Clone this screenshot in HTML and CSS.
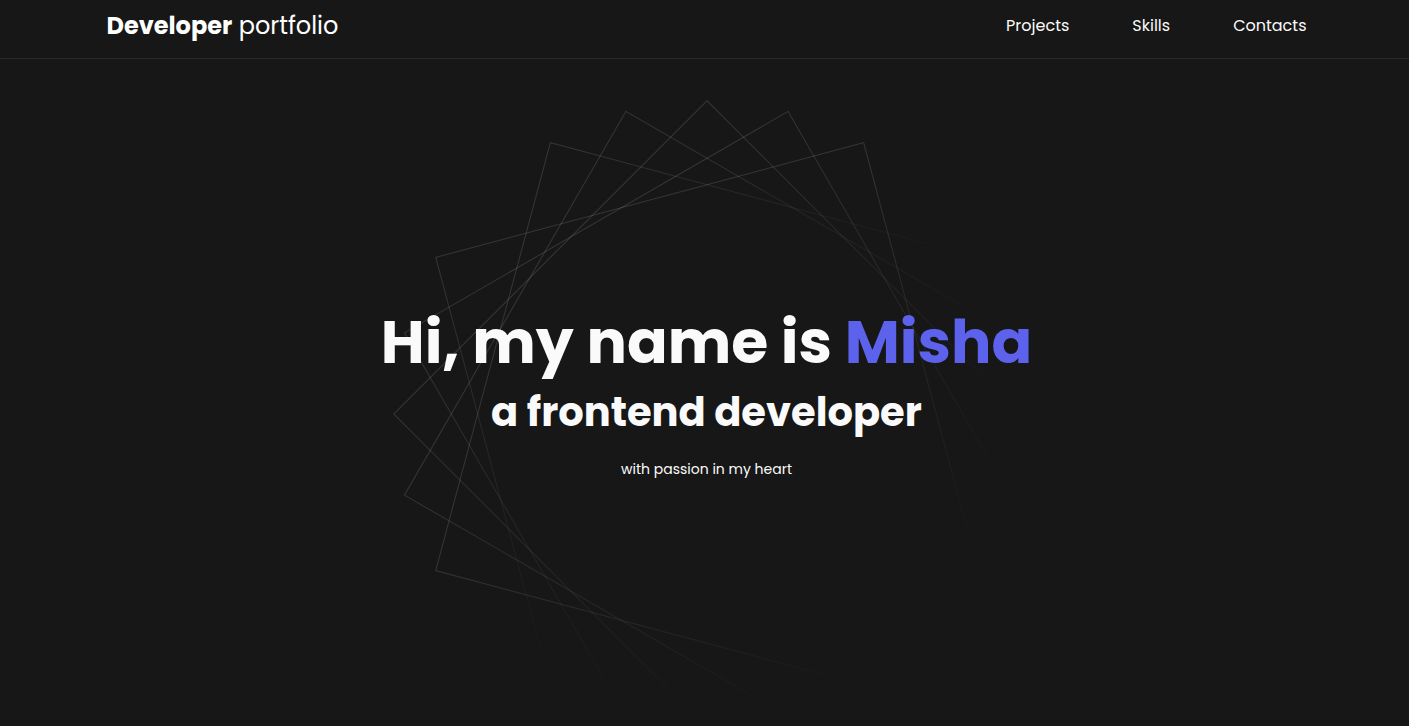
FILE: index.html
```html
<!DOCTYPE html>
<html lang="en">
<head>
<meta charset="utf-8">
<meta name="viewport" content="width=device-width, initial-scale=1">
<title>Developer portfolio</title>
<link rel="stylesheet" href="styles.css">
</head>
<body>
<header class="header">
  <div class="container header-row">
    <a class="logo" href="#"><strong>Developer</strong> portfolio</a>
    <nav class="nav">
      <a class="nav-link" href="#projects">Projects</a>
      <a class="nav-link" href="#skills">Skills</a>
      <a class="nav-link" href="#contacts">Contacts</a>
    </nav>
  </div>
</header>
<main class="hero">
  <svg class="hero-art" viewBox="-315 -315 630 630" aria-hidden="true">
    <defs>
      <linearGradient id="fade" gradientUnits="userSpaceOnUse" x1="0" y1="-222" x2="0" y2="214">
        <stop offset="0" stop-color="#fff" stop-opacity=".13"/>
        <stop offset="1" stop-color="#fff" stop-opacity="0"/>
      </linearGradient>
    </defs>
    <g fill="none" stroke="url(#fade)">
      <rect x="-221.5" y="-221.5" width="443" height="443" transform="rotate(-15)"/>
      <rect x="-221.5" y="-221.5" width="443" height="443" transform="rotate(-30)"/>
      <rect x="-221.5" y="-221.5" width="443" height="443" transform="rotate(-45)"/>
      <rect x="-221.5" y="-221.5" width="443" height="443" transform="rotate(-60)"/>
      <rect x="-221.5" y="-221.5" width="443" height="443" transform="rotate(-75)"/>
    </g>
  </svg>
  <div class="hero-text">
    <h1 class="hero-title">Hi, my name is <span class="accent">Misha</span></h1>
    <h2 class="hero-subtitle">a frontend developer</h2>
    <p class="hero-note">with passion in my heart</p>
  </div>
</main>
</body>
</html>
```
FILE: styles.css
```css
* {
  box-sizing: border-box;
}

body {
  margin: 0;
  min-height: 100vh;
  display: flex;
  flex-direction: column;
  background: #171717;
  color: #fafafa;
  font-family: Poppins, Inter, "Open Sans", sans-serif;
}

.header {
  border-bottom: 1px solid #292929;
}

.container {
  width: 100%;
  max-width: 1204px;
  margin: 0 auto;
  padding-left: 4px;
}

.header-row {
  display: flex;
  align-items: center;
  justify-content: space-between;
  padding-top: 8px;
  padding-bottom: 14px;
}

.logo {
  color: #fff;
  font-size: 24px;
  line-height: 36px;
  text-decoration: none;
}

.logo strong {
  font-weight: 700;
}

.nav {
  display: flex;
  gap: 63px;
}

.nav-link {
  color: #fafafa;
  font-size: 16px;
  line-height: 24px;
  text-decoration: none;
}

.hero {
  flex: 1;
  display: grid;
  justify-items: center;
  align-items: start;
  padding: 40px 0 10px 4px;
}

.hero-art,
.hero-text {
  grid-area: 1 / 1;
}

.hero-art {
  width: 100%;
  max-width: 630px;
}

.hero-text {
  position: relative;
  padding-top: 202px;
  text-align: center;
}

.hero-title {
  margin: 0;
  font-size: 60px;
  line-height: 82px;
  font-weight: 700;
}

.accent {
  color: #5c62ec;
}

.hero-subtitle {
  margin: 0;
  font-size: 40px;
  line-height: 58px;
  font-weight: 700;
}

.hero-note {
  margin: 18px 0 0;
  font-size: 14px;
  line-height: 20px;
}
```
